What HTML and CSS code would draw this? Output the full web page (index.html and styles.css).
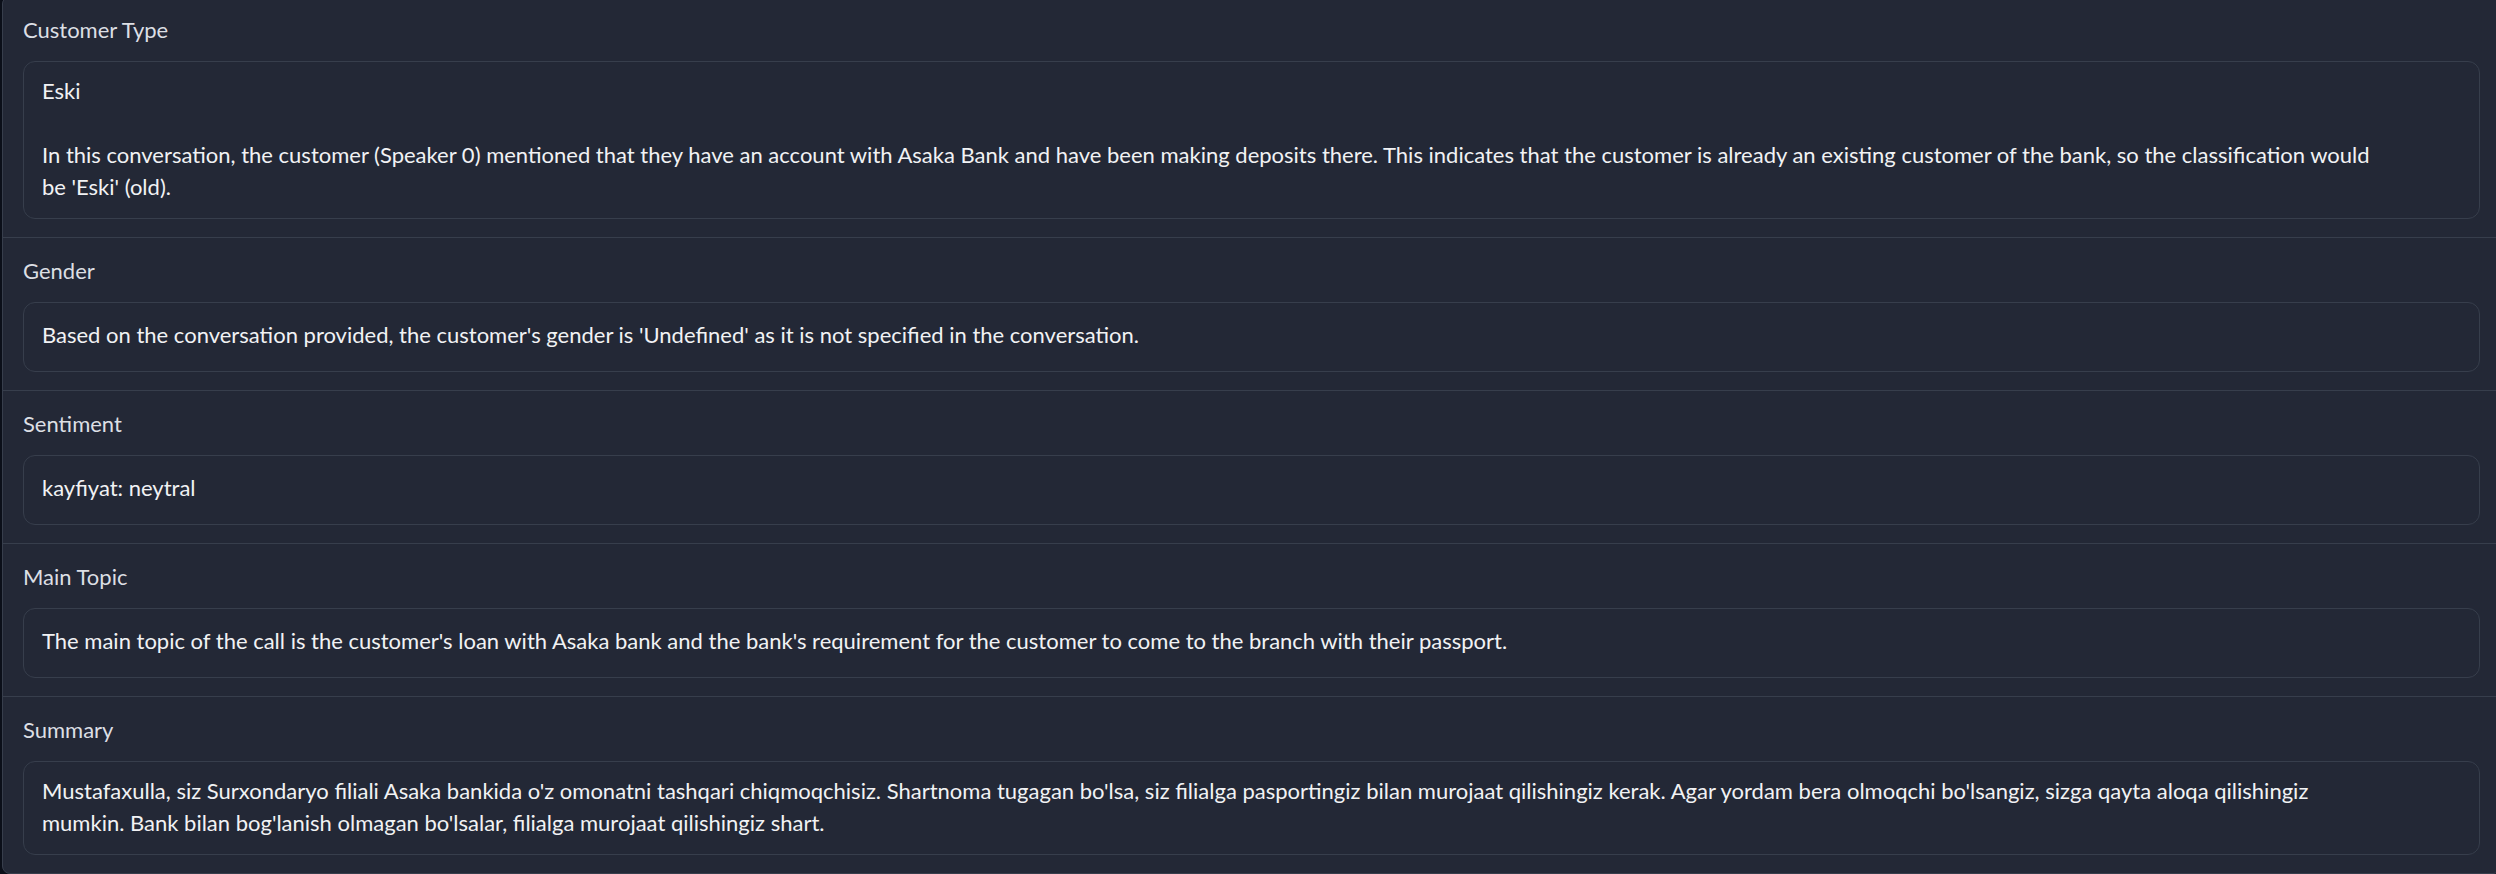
FILE: index.html
```html
<!DOCTYPE html>
<html lang="en">
<head>
<meta charset="utf-8">
<title>Call analysis</title>
<link rel="stylesheet" href="styles.css">
</head>
<body>
<div class="form">
  <section class="field">
    <div class="label">Customer Type</div>
    <div class="box">Eski<br><br>In this conversation, the customer (Speaker 0) mentioned that they have an account with Asaka Bank and have been making deposits there. This indicates that the customer is already an existing customer of the bank, so the classification would be 'Eski' (old).</div>
  </section>
  <section class="field">
    <div class="label">Gender</div>
    <div class="box single">Based on the conversation provided, the customer's gender is 'Undefined' as it is not specified in the conversation.</div>
  </section>
  <section class="field">
    <div class="label">Sentiment</div>
    <div class="box single">kayfiyat: neytral</div>
  </section>
  <section class="field">
    <div class="label">Main Topic</div>
    <div class="box single">The main topic of the call is the customer's loan with Asaka bank and the bank's requirement for the customer to come to the branch with their passport.</div>
  </section>
  <section class="field">
    <div class="label">Summary</div>
    <div class="box">Mustafaxulla, siz Surxondaryo filiali Asaka bankida o'z omonatni tashqari chiqmoqchisiz. Shartnoma tugagan bo'lsa, siz filialga pasportingiz bilan murojaat qilishingiz kerak. Agar yordam bera olmoqchi bo'lsangiz, sizga qayta aloqa qilishingiz mumkin. Bank bilan bog'lanish olmagan bo'lsalar, filialga murojaat qilishingiz shart.</div>
  </section>
</div>
</body>
</html>
```

FILE: styles.css
```css
html, body {
  margin: 0;
  padding: 0;
  overflow: hidden;
  background: #0b0f19;
}

body {
  width: 2496px;
  height: 874px;
  font-family: "Lato", "Noto Sans", sans-serif;
  font-size: 22px;
  line-height: 32px;
}

.form {
  width: 2499px;
  margin: -4px 0 0 2px;
  box-sizing: border-box;
  border: 1px solid #373e4c;
  border-radius: 8px;
  background: #373e4c;
  display: flex;
  flex-direction: column;
  gap: 1px;
  overflow: hidden;
}

.field {
  background: #232836;
  padding: 17px 20px 18px;
  display: flex;
  flex-direction: column;
  gap: 15px;
}

.label {
  color: #dcdfe4;
  height: 32px;
}

.box {
  border: 1px solid #373e4c;
  border-radius: 12px;
  background: #232836;
  color: #f1f2f4;
  padding: 13px 91px 15px 18px;
}

.box.single {
  padding-top: 16px;
  padding-bottom: 20px;
}
```
